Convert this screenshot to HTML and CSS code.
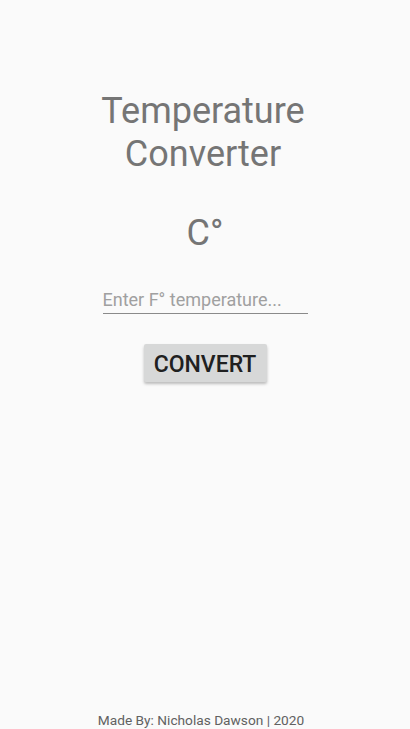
FILE: index.html
```html
<!DOCTYPE html>
<html>
<head>
<meta charset="utf-8">
<link rel="stylesheet" href="styles.css">
</head>
<body>
<div class="app">
  <main class="content">
    <h1 class="title">Temperature<br>Converter</h1>
    <div class="result">C°</div>
    <input class="field" type="text" placeholder="Enter F° temperature...">
    <button class="convert">CONVERT</button>
  </main>
  <footer class="footer">Made By: Nicholas Dawson | 2020</footer>
</div>
</body>
</html>
```
FILE: styles.css
```css
html, body {
  margin: 0;
  padding: 0;
  background: #fafafa;
  font-family: Roboto, "Noto Sans", sans-serif;
}
.app {
  height: 729px;
  display: flex;
  flex-direction: column;
  align-items: center;
}
.content {
  flex: 1;
  display: flex;
  flex-direction: column;
  align-items: center;
  padding-top: 90px;
}
.title {
  margin: 0 4px 0 0;
  font-weight: 400;
  font-size: 36px;
  line-height: 43px;
  color: #757575;
  text-align: center;
}
.result {
  margin-top: 36px;
  font-size: 36px;
  line-height: 42px;
  color: #757575;
}
.field {
  margin-top: 35px;
  width: 205px;
  box-sizing: border-box;
  border: none;
  border-bottom: 1px solid #8a8a8a;
  background: transparent;
  padding: 0 0 2px 0;
  font-family: Roboto, sans-serif;
  font-size: 18px;
  line-height: 22px;
  color: #333;
  outline: none;
}
.field::placeholder {
  color: #a0a0a0;
}
.convert {
  margin-top: 30px;
  width: 123px;
  height: 38px;
  border: none;
  border-radius: 2px;
  background: #d7d8d8;
  color: #202020;
  font-family: Roboto, sans-serif;
  font-weight: 500;
  font-size: 23px;
  padding: 3px 0 0 0;
  box-shadow: 0 2px 3px rgba(0,0,0,0.25);
}
.footer {
  font-size: 13.7px;
  color: #616161;
  line-height: 16px;
  padding-bottom: 1px;
  margin-right: 8px;
}
```
